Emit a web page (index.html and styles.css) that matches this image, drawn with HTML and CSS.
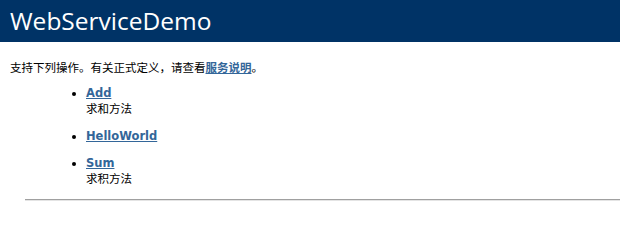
FILE: index.html
```
<!DOCTYPE html>
<html lang="zh-CN">
<head>
<meta charset="utf-8">
<title>WebServiceDemo Web 服务</title>
<link rel="stylesheet" href="styles.css">
</head>
<body>
<div class="heading1">WebServiceDemo</div>
<div class="content">
  <p class="intro">支持下列操作。有关正式定义，请查看<a href="#">服务说明</a>。</p>
  <ul class="ops">
    <li><a href="#">Add</a><br><span class="desc">求和方法</span></li>
    <li><a href="#">HelloWorld</a></li>
    <li><a href="#">Sum</a><br><span class="desc">求积方法</span></li>
  </ul>
  <hr class="rule">
</div>
</body>
</html>
```

FILE: styles.css
```
html, body {
  margin: 0;
  padding: 0;
  background: #ffffff;
}
body {
  color: #000000;
  font-family: "DejaVu Sans", "Noto Sans CJK SC", sans-serif;
  font-size: 11.5px;
  line-height: 16px;
}
.heading1 {
  background: #003366;
  color: #ffffff;
  font-family: "Open Sans", "Noto Sans", sans-serif;
  font-size: 24.5px;
  line-height: 42px;
  height: 42px;
  padding-left: 10px;
  box-sizing: border-box;
}
.content {
  padding-left: 10px;
}
.intro {
  margin: 18px 0 0 0;
}
a {
  color: #336699;
  font-weight: bold;
  text-decoration: underline;
}
.ops {
  margin: 9px 0 0 0;
  padding-left: 76px;
  display: flex;
  flex-direction: column;
  gap: 11px;
}
.ops li {
  list-style: disc;
}
.rule {
  margin: 12px 0 0 15px;
  border: 0;
  border-top: 1px solid #a0a0a0;
  border-bottom: 1px solid #e4e4e4;
  height: 0;
}
```
